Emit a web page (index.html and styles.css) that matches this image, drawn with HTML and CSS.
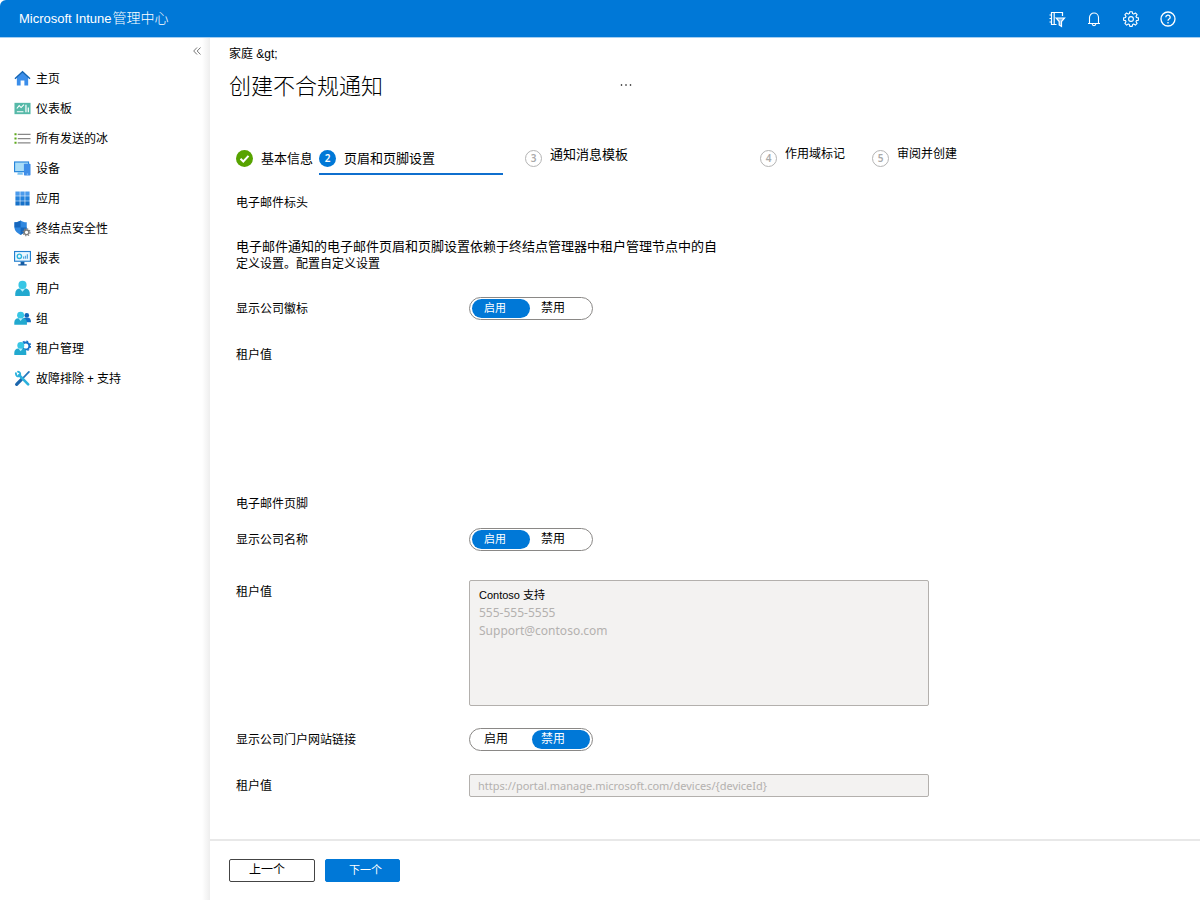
FILE: index.html
```html
<!DOCTYPE html>
<html lang="zh-CN">
<head>
<meta charset="utf-8">
<title>Microsoft Intune 管理中心</title>
<meta name="viewport" content="width=device-width, initial-scale=1">
<link rel="stylesheet" href="styles.css">
</head>
<body>
<header class="topbar">
  <div class="brand"><span class="brand-latin">Microsoft Intune</span><span>管理中心</span></div>
  <div class="top-actions">
    <button type="button" aria-label="目录和订阅">
      <svg width="18" height="18" viewBox="0 0 18 18" fill="none" stroke="currentColor" stroke-width="1.200"><path d="M14.500 6V2.500h-11v12h5M6.200 2.500v12M1.500 5h2M1.500 8.500h2M1.500 12h2"/><path d="M8.200 8h8.300l-3 3.500v5l-2.300-1.500v-3.500z" fill="#7db9ee"/></svg>
    </button>
    <button type="button" aria-label="通知">
      <svg width="18" height="18" viewBox="0 0 18 18" fill="none" stroke="currentColor" stroke-width="1.100"><path d="M3 13.500h12M4.500 13.500V7.500a4.500 4.500 0 0 1 9 0v6M7.200 14a1.800 1.600 0 0 0 3.600 0"/></svg>
    </button>
    <button type="button" aria-label="设置">
      <svg width="18" height="18" viewBox="0 0 18 18" fill="none" stroke="currentColor" stroke-width="1.100" stroke-linejoin="round"><path d="M7.800 1.700h2.400l.4 1.900 1.100.5 1.700-1.100 1.700 1.700-1.100 1.700.5 1.100 1.900.4v2.300l-1.900.4-.5 1.100 1.100 1.700-1.700 1.700-1.700-1.100-1.100.5-.4 1.900H7.800l-.4-1.900-1.100-.5-1.700 1.100-1.700-1.700L4 11.700l-.5-1.100-1.900-.4V7.900l1.900-.4L4 6.400 2.900 4.700 4.600 3l1.700 1.100 1.100-.5z"/><circle cx="9" cy="9" r="2.400"/></svg>
    </button>
    <button type="button" aria-label="帮助">
      <svg width="18" height="18" viewBox="0 0 18 18" fill="none" stroke="currentColor" stroke-width="1.300"><circle cx="9" cy="9" r="7"/><path d="M6.800 7.200a2.200 2.100 0 1 1 3.300 1.800c-.8.5-1.100.9-1.100 1.800M9 12v1.500"/></svg>
    </button>
  </div>
</header>

<div class="shell">
  <nav class="sidebar" aria-label="主导航">
    <button class="collapse" type="button" aria-label="折叠菜单">
      <svg width="8" height="8" viewBox="0 0 8 8" fill="none" stroke="currentColor"><path d="M4 .5.700 4 4 7.500M7.500.5 4.200 4l3.300 3.500"/></svg>
    </button>
    <ul class="menu">
      <li><a href="#">
        <svg viewBox="0 0 18 18"><path d="M3 8l6-5.500L15 8v8.300h-4V11H7v5.300H3z" fill="#3b8eea"/><path d="M9 .8 17.500 8.700l-1 1.100L9 3 1.500 9.800l-1-1.100z" fill="#1264b4"/></svg>
        <span>主页</span></a></li>
      <li><a href="#">
        <svg viewBox="0 0 18 18"><path d="M.5 3h17v12H.5z" fill="#56b9a8"/><path d="M3 9l2.500-3 2 2L10.500 5M3 12.500h7" fill="none" stroke="#fff" stroke-width="1.200"/><path d="M12 5h1.300v8H12zM14.500 8h1.300v5h-1.300z" fill="#fff"/></svg>
        <span>仪表板</span></a></li>
      <li><a href="#">
        <svg viewBox="0 0 18 18"><path d="M.5 3.500h2.200v2H.5zM.5 8h2.200v2H.5zM.5 12.500h2.200v2H.5z" fill="#5ea91c"/><path d="M4 4h13.500v1.200H4zM4 8.500h13.500v1.200H4zM4 13h13.500v1.200H4z" fill="#888"/></svg>
        <span>所有发送的冰</span></a></li>
      <li><a href="#">
        <svg viewBox="0 0 18 18"><path d="M0 1.500h16V13H0z" fill="#2785db"/><path d="M1.200 2.700h13.600v9H1.200z" fill="#a9ddf8"/><path d="M4 13h5l.5 2.500H3.500z" fill="#7cc3f1"/><rect x="10.500" y="4" width="7" height="12.500" rx=".8" fill="#3f8ee8"/><path d="M13.500 14.500h1.500v.8h-1.500z" fill="#cbe8ff"/></svg>
        <span>设备</span></a></li>
      <li><a href="#">
        <svg viewBox="0 0 18 18"><path d="M1.500 1.500h4.600v4.600H1.500zM6.700 1.500h4.600v4.600H6.700zM11.900 1.500h4.600v4.600h-4.600z" fill="#4b9bec"/><path d="M1.500 6.700h4.600v4.600H1.500zM6.700 6.700h4.600v4.600H6.700zM11.900 6.700h4.600v4.600h-4.600z" fill="#2482dc"/><path d="M1.500 11.900h4.600v4.600H1.500zM6.700 11.900h4.600v4.600H6.700zM11.900 11.900h4.600v4.600h-4.600z" fill="#1671c9"/></svg>
        <span>应用</span></a></li>
      <li><a href="#">
        <svg viewBox="0 0 18 18"><path d="M.5 2.500C3.500 2.300 5.300 1.800 7 .5c1.700 1.300 3.500 1.800 6.500 2V8c0 4-3.500 6.200-6.500 7.800C4 14.200.5 12 .5 8z" fill="#2f87df"/><path d="M7 .5C5.300 1.800 3.500 2.300.5 2.500V8H7zM7 8h6.500c0 4-3.500 6.200-6.500 7.800z" fill="#1667bd"/><circle cx="13.300" cy="13" r="2.500" fill="#fff" stroke="#7d7d7d" stroke-width="1.500"/><circle cx="13.300" cy="13" r="3.700" fill="none" stroke="#7d7d7d" stroke-width="1.200" stroke-dasharray="1.450 1.450"/></svg>
        <span>终结点安全性</span></a></li>
      <li><a href="#">
        <svg viewBox="0 0 18 18"><path d="M0 1h18v11.500H0z" fill="#2380d0"/><path d="M1.200 2.200h15.600v9.100H1.200z" fill="#eaf7ff"/><path d="M7 12.500h4V15h2.500v1.500h-9V15H7z" fill="#145ca4"/><circle cx="5.700" cy="6.700" r="2.300" fill="none" stroke="#28b4dc" stroke-width="1.400"/><path d="M9.500 7h1.300v2.200H9.500zM11.500 6h1.300v3.200h-1.300zM13.500 4.500h1.300v4.700h-1.300z" fill="#54a7df"/></svg>
        <span>报表</span></a></li>
      <li><a href="#">
        <svg viewBox="0 0 18 18"><path d="M1.300 17v-2.500c0-3.700 2.200-5.500 5-5.500h5.400c2.800 0 5 1.800 5 5.500V17z" fill="#22a9cf"/><path d="M6 9h6l-3 3.500z" fill="#b8f0fc"/><circle cx="9" cy="5.200" r="4.300" fill="#37c6e5"/></svg>
        <span>用户</span></a></li>
      <li><a href="#">
        <svg viewBox="0 0 18 18"><circle cx="13.500" cy="5.700" r="2.500" fill="#0d65b8"/><path d="M9.500 13V9.800C10 8.600 11 8.200 12 8.200h3c2 0 3 1.700 3 4.800z" fill="#1471c8"/><circle cx="7" cy="5.500" r="3.700" fill="#37c6e5"/><path d="M.3 15.500v-2c0-3 1.800-4.700 4-4.700h5.400c2.200 0 4 1.700 4 4.700v2z" fill="#22a9cf"/><path d="M4.700 8.800h4.600L7 11.700z" fill="#b8f0fc"/></svg>
        <span>组</span></a></li>
      <li><a href="#">
        <svg viewBox="0 0 18 18"><circle cx="12.500" cy="6.300" r="3.700" fill="#fff" stroke="#1471c8" stroke-width="2"/><circle cx="12.500" cy="6.300" r="5.100" fill="none" stroke="#1471c8" stroke-width="1.300" stroke-dasharray="2 2"/><circle cx="7.200" cy="5.800" r="3.700" fill="#37c6e5"/><path d="M.3 16v-2.200c0-3 1.800-4.700 4-4.700h5.400c2.200 0 3.300 1.700 3.300 4.700V16z" fill="#22a9cf"/><path d="M4.700 9.100h4.600L7 12z" fill="#b8f0fc"/></svg>
        <span>租户管理</span></a></li>
      <li><a href="#">
        <svg viewBox="0 0 18 18" fill="none" stroke-linecap="round"><path d="M15.800 2 10 8" stroke="#2377bd" stroke-width="1.800"/><path d="m8 10-5.200 5.200" stroke="#1b66ad" stroke-width="3.400"/><path d="m5.500 5.500 9.500 9.700" stroke="#2bb1dc" stroke-width="2.800"/><path d="M2 3.500c0 2.600 1.700 3.700 3.700 3C7.500 4.500 6.500 2 4.300 1.800" stroke="#2bb1dc" stroke-width="2"/></svg>
        <span>故障排除 + 支持</span></a></li>
    </ul>
  </nav>

  <main class="page">
    <div class="page-body">
      <div class="crumb">家庭 &amp;gt;</div>
      <div class="title-row">
        <h1>创建不合规通知</h1>
        <button type="button" aria-label="更多"><svg width="12" height="4" viewBox="0 0 12 4" fill="currentColor"><circle cx="1.500" cy="2" r=".8"/><circle cx="6" cy="2" r=".8"/><circle cx="10.500" cy="2" r=".8"/></svg></button>
      </div>

      <ol class="steps">
        <li class="step done"><span class="mark"><svg width="17" height="17" viewBox="0 0 17 17"><path d="m4.500 8.700 2.800 2.800 5.200-5.700" fill="none" stroke="#fff" stroke-width="2"/></svg></span><span>基本信息</span></li>
        <li class="step current" aria-current="step"><span class="mark">2</span><span>页眉和页脚设置</span></li>
        <li class="step todo wide"><span class="mark">3</span><span class="caption">通知消息模板</span></li>
        <li class="step todo small"><span class="mark">4</span><span class="caption">作用域标记</span></li>
        <li class="step todo small"><span class="mark">5</span><span class="caption">审阅并创建</span></li>
      </ol>

      <form class="form" id="settings">
        <h2>电子邮件标头</h2>
        <p class="intro">电子邮件通知的电子邮件页眉和页脚设置依赖于终结点管理器中租户管理节点中的自<br>定义设置。配置自定义设置</p>

        <div class="row" role="radiogroup" aria-labelledby="l-logo">
          <span class="label" id="l-logo">显示公司徽标</span>
          <div class="toggle">
            <label><input type="radio" name="logo" checked><span>启用</span></label>
            <label><input type="radio" name="logo"><span>禁用</span></label>
          </div>
        </div>
        <div class="row logo-value"><span class="label">租户值</span></div>

        <h2>电子邮件页脚</h2>
        <div class="row name-row" role="radiogroup" aria-labelledby="l-name">
          <span class="label" id="l-name">显示公司名称</span>
          <div class="toggle">
            <label><input type="radio" name="company" checked><span>启用</span></label>
            <label><input type="radio" name="company"><span>禁用</span></label>
          </div>
        </div>
        <div class="row contact-row">
          <label class="label" for="contact">租户值</label>
          <div class="contact">
            <textarea id="contact" readonly>555-555-5555
Support@contoso.com</textarea>
            <span class="contact-name">Contoso 支持</span>
          </div>
        </div>
        <div class="row" role="radiogroup" aria-labelledby="l-link">
          <span class="label" id="l-link">显示公司门户网站链接</span>
          <div class="toggle">
            <label><input type="radio" name="link"><span>启用</span></label>
            <label><input type="radio" name="link" checked><span>禁用</span></label>
          </div>
        </div>
        <div class="row link-row">
          <label class="label" for="url">租户值</label>
          <input class="field" id="url" type="text" readonly value="https://portal.manage.microsoft.com/devices/{deviceId}">
        </div>
      </form>
    </div>

    <footer class="actions">
      <button class="btn" type="button">上一个</button>
      <button class="btn primary" type="button">下一个</button>
    </footer>
  </main>
</div>
</body>
</html>
```
FILE: styles.css
```css
* {
  box-sizing: border-box;
}

body {
  margin: 0;
  min-height: 100vh;
  display: flex;
  flex-direction: column;
  background: #fff;
  color: #000;
  font: 12px/18px "Noto Sans", "Noto Sans CJK SC", sans-serif;
}

button,
input,
textarea {
  font: inherit;
}

button {
  padding: 0;
  border: 0;
  background: none;
  color: inherit;
  cursor: pointer;
}

h1,
h2,
p,
ul,
ol {
  margin: 0;
  padding: 0;
  font-weight: 400;
  list-style: none;
}

.topbar {
  display: flex;
  align-items: center;
  justify-content: space-between;
  height: 38px;
  padding: 0 14px 0 19px;
  border-bottom: 1px solid #a5cef0;
  border-top-left-radius: 6px;
  background: #0078d7;
  color: #fff;
}

.brand {
  display: flex;
  align-items: baseline;
  gap: 1px;
  font-size: 14px;
  font-weight: 300;
}

.brand-latin {
  font-family: "Liberation Sans", sans-serif;
  font-size: 13px;
}

.top-actions {
  display: flex;
}

.top-actions button {
  display: grid;
  place-items: center;
  width: 37px;
  height: 37px;
}

.shell {
  flex: 1;
  display: flex;
}

.sidebar {
  flex: none;
  width: 210px;
  display: flex;
  flex-direction: column;
  background: linear-gradient(to left, #eee, #fff 8px);
}

.collapse {
  align-self: flex-end;
  display: grid;
  place-items: center;
  width: 26px;
  height: 25px;
  color: #777;
}

.menu a {
  display: flex;
  align-items: center;
  gap: 5px;
  height: 30px;
  padding-left: 14px;
  color: inherit;
  text-decoration: none;
}

.menu span {
  padding-top: 1px;
}

.menu svg {
  flex: none;
  width: 17px;
  height: 17px;
}

.page {
  flex: 1;
  min-width: 0;
  display: flex;
  flex-direction: column;
}

.page-body {
  flex: 1;
  padding: 7px 19px 24px;
}

.crumb {
  font-family: "Liberation Sans", "Noto Sans CJK SC", sans-serif;
}

.title-row {
  display: flex;
  align-items: center;
  justify-content: space-between;
  max-width: 403px;
  height: 44px;
}

.title-row h1 {
  font-size: 22px;
  line-height: 30px;
  font-weight: 300;
}

.title-row button {
  display: flex;
}

.steps {
  display: flex;
  align-items: center;
  margin: 34px 0 0 7px;
  height: 34px;
}

.step {
  display: flex;
  align-items: center;
  gap: 8px;
  height: 100%;
  font-size: 13px;
  white-space: nowrap;
}

.mark {
  display: grid;
  place-items: center;
  width: 17px;
  height: 17px;
  border-radius: 50%;
  font-size: 10px;
  line-height: 12px;
  font-weight: 600;
}

.done {
  flex: 0 1 83px;
}

.done .mark {
  background: #57a300;
}

.current {
  flex: 0 1 184px;
  margin-right: 22px;
  border-bottom: 2px solid #0f6fce;
  border-top: 2px solid transparent;
}

.current .mark {
  background: #0078d7;
  color: #fff;
}

.todo .mark {
  border: 1px solid #b4b4b4;
  color: #aaa;
}

.todo .caption {
  padding-bottom: 8px;
}

.wide {
  flex: 0 1 235px;
}

.small {
  flex: 0 1 112px;
  font-size: 12px;
}

.form {
  margin: 19px 0 0 7px;
}

.form h2 {
  font-size: 12px;
  line-height: 18px;
}

.intro {
  margin: 25px 0 24px;
}

.intro::first-line {
  font-size: 13px;
}

.row {
  display: grid;
  grid-template-columns: 233px minmax(0, 460px);
  align-items: start;
}

.label {
  padding: 3px 0 2px;
}

.logo-value {
  margin: 23px 0 129px;
}

.name-row {
  margin: 15px 0 29px;
}

.contact-row {
  margin-bottom: 22px;
}

.link-row {
  margin-top: 23px;
}

.toggle {
  display: grid;
  grid-template-columns: 1fr 1fr;
  width: 124px;
  height: 23px;
  padding: 1px;
  border: 1px solid #8a8886;
  border-radius: 12px;
  background: #fff;
}

.toggle label {
  position: relative;
  display: flex;
  cursor: pointer;
}

.toggle input {
  position: absolute;
  opacity: 0;
  margin: 0;
}

.toggle span {
  flex: 1;
  margin: 0 1px;
  padding-left: 12px;
  border-radius: 10px;
  line-height: 18px;
}

.toggle label + label span {
  padding-left: 9px;
}

.toggle input:checked + span {
  background: #0078d7;
  color: #fff;
}

.toggle label:first-child input:checked + span {
  font-size: 11px;
}

.toggle input:focus-visible + span {
  outline: 1px solid #000;
}

.contact {
  display: grid;
}

.contact textarea,
.contact-name {
  grid-area: 1 / 1;
}

.contact textarea {
  width: 100%;
  height: 126px;
  padding: 23px 9px 8px;
  resize: none;
}

.contact-name {
  align-self: start;
  padding: 6px 10px;
  font-family: "Liberation Sans", "Noto Sans CJK SC", sans-serif;
  font-size: 11px;
}

.contact textarea,
.field {
  border: 1px solid #b3b0ad;
  border-radius: 2px;
  background: #f3f2f1;
  color: #b3b1af;
}

.field {
  width: 100%;
  height: 23px;
  padding: 0 8px;
  font-size: 11px;
}

.actions {
  display: flex;
  gap: 10px;
  padding: 18px 19px;
  border-top: 2px solid #e8e8e8;
}

.btn {
  width: 86px;
  height: 23px;
  padding: 0 10px 2px 0;
  border: 1px solid #444;
  border-radius: 2px;
  background: #fff;
  line-height: 18px;
}

.btn.primary {
  width: 75px;
  padding: 0 0 2px 6px;
  border-color: #0078d7;
  background: #0078d7;
  color: #fff;
  font-size: 11px;
}
```
